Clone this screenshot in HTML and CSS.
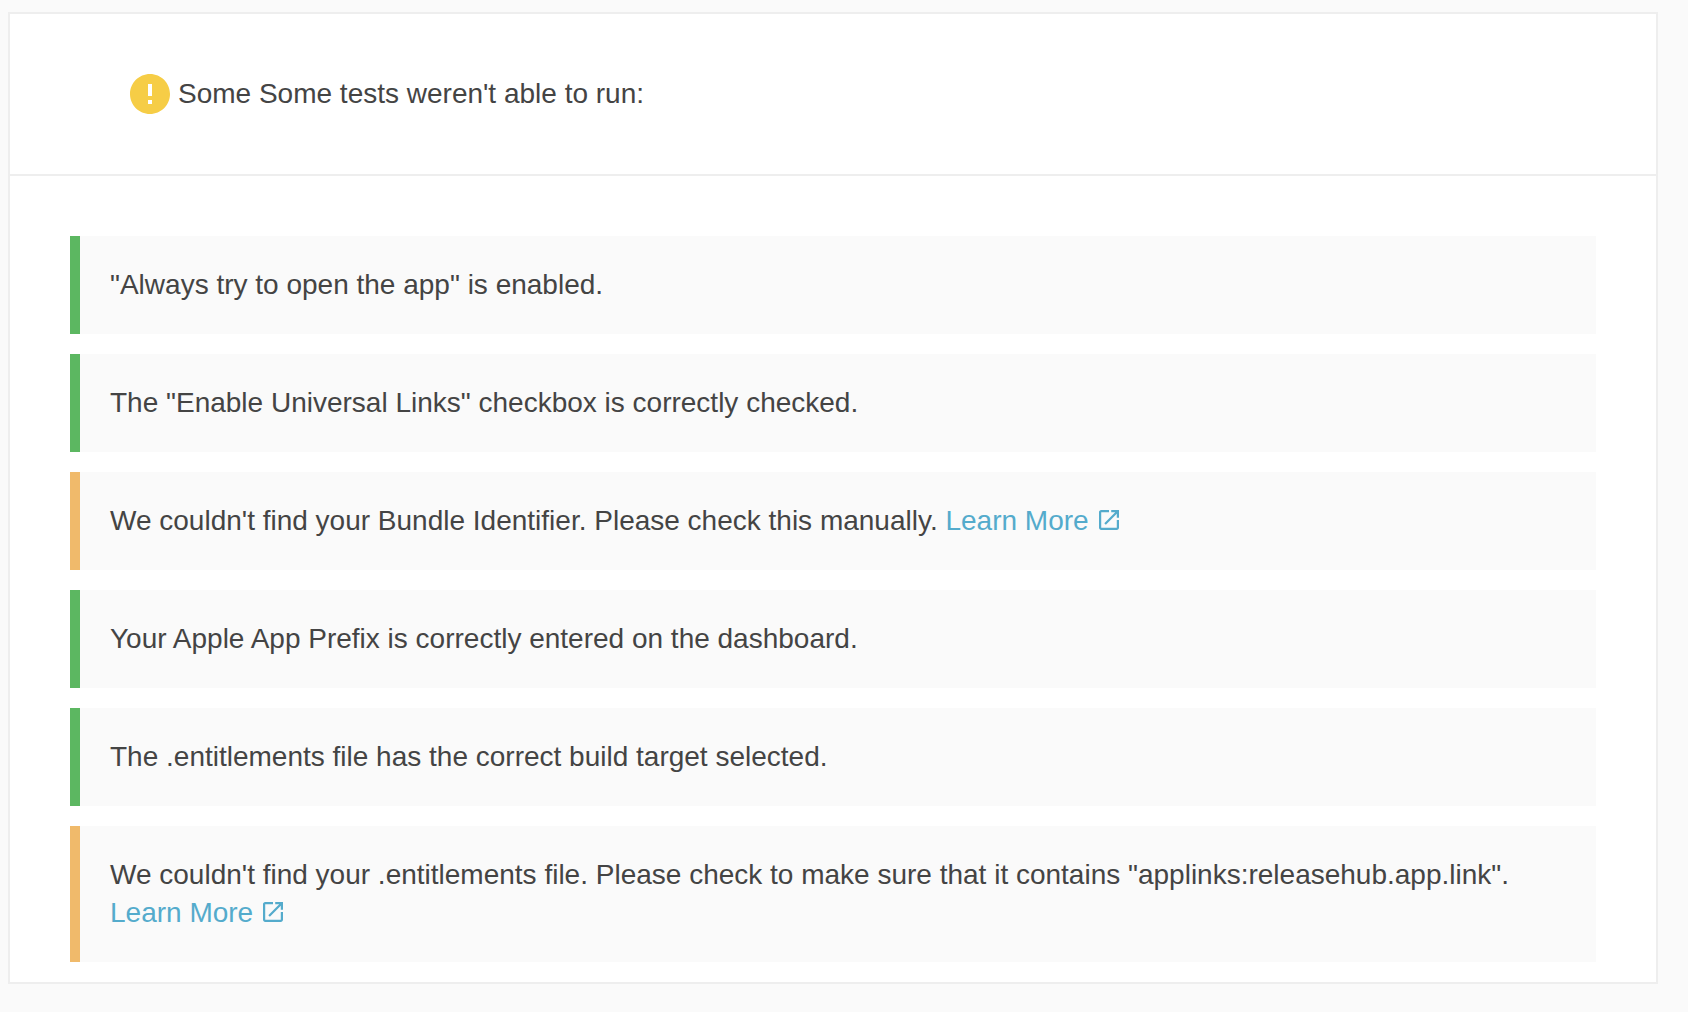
FILE: index.html
```
<!DOCTYPE html>
<html lang="en">
<head>
	<meta charset="utf-8">
	<title>Universal Links Tests</title>
	<link rel="stylesheet" href="styles.css">
</head>
<body>
	<div class="panel">
		<div class="panel-header">
			<svg class="icon-warning" viewBox="2 2 20 20" aria-hidden="true">
				<path d="M12 2C6.48 2 2 6.48 2 12s4.48 10 10 10 10-4.48 10-10S17.52 2 12 2zm1 15h-2v-2h2v2zm0-4h-2V7h2v6z"/>
			</svg>
			<span>Some Some tests weren't able to run:</span>
		</div>
		<div class="panel-body">
			<div class="result success">"Always try to open the app" is enabled.</div>
			<div class="result success">The "Enable Universal Links" checkbox is correctly checked.</div>
			<div class="result warning">
				We couldn't find your Bundle Identifier. Please check this manually.
				<a href="#" class="learn-more">Learn More<svg class="icon-open" viewBox="3 3 18 18" aria-hidden="true"><path d="M19 19H5V5h7V3H5c-1.11 0-2 .9-2 2v14c0 1.1.89 2 2 2h14c1.1 0 2-.9 2-2v-7h-2v7zM14 3v2h3.59l-9.83 9.83 1.41 1.41L19 6.41V10h2V3h-7z"/></svg></a>
			</div>
			<div class="result success">Your Apple App Prefix is correctly entered on the dashboard.</div>
			<div class="result success">The .entitlements file has the correct build target selected.</div>
			<div class="result warning">
				We couldn't find your .entitlements file. Please check to make sure that it contains "applinks:releasehub.app.link".
				<a href="#" class="learn-more">Learn More<svg class="icon-open" viewBox="3 3 18 18" aria-hidden="true"><path d="M19 19H5V5h7V3H5c-1.11 0-2 .9-2 2v14c0 1.1.89 2 2 2h14c1.1 0 2-.9 2-2v-7h-2v7zM14 3v2h3.59l-9.83 9.83 1.41 1.41L19 6.41V10h2V3h-7z"/></svg></a>
			</div>
		</div>
	</div>
</body>
</html>
```
FILE: styles.css
```
* {
	box-sizing: border-box;
}
body {
	margin: 0;
	padding: 12px 30px 28px 8px;
	background: #fafafa;
	color: #444;
	font-family: "Helvetica Neue", Helvetica, "Liberation Sans", Arial, sans-serif;
	font-size: 28px;
	line-height: 38px;
}
.panel {
	background: #fff;
	border: 2px solid #eee;
}
.panel-header {
	display: flex;
	align-items: center;
	gap: 8px;
	padding: 60px 120px;
	border-bottom: 2px solid #eee;
}
.icon-warning {
	flex: none;
	width: 40px;
	height: 40px;
	fill: #f6cd46;
}
.panel-body {
	display: flex;
	flex-direction: column;
	gap: 20px;
	padding: 60px 60px 20px;
}
.result {
	padding: 30px;
	background: #fafafa;
	border-left: 10px solid #ccc;
}
.success {
	border-left-color: #5cb761;
}
.warning {
	border-left-color: #f0ba6b;
}
.learn-more {
	color: #54abcc;
	text-decoration: none;
	white-space: nowrap;
}
.icon-open {
	width: 20px;
	height: 20px;
	margin-left: 10px;
	fill: currentColor;
}
```
